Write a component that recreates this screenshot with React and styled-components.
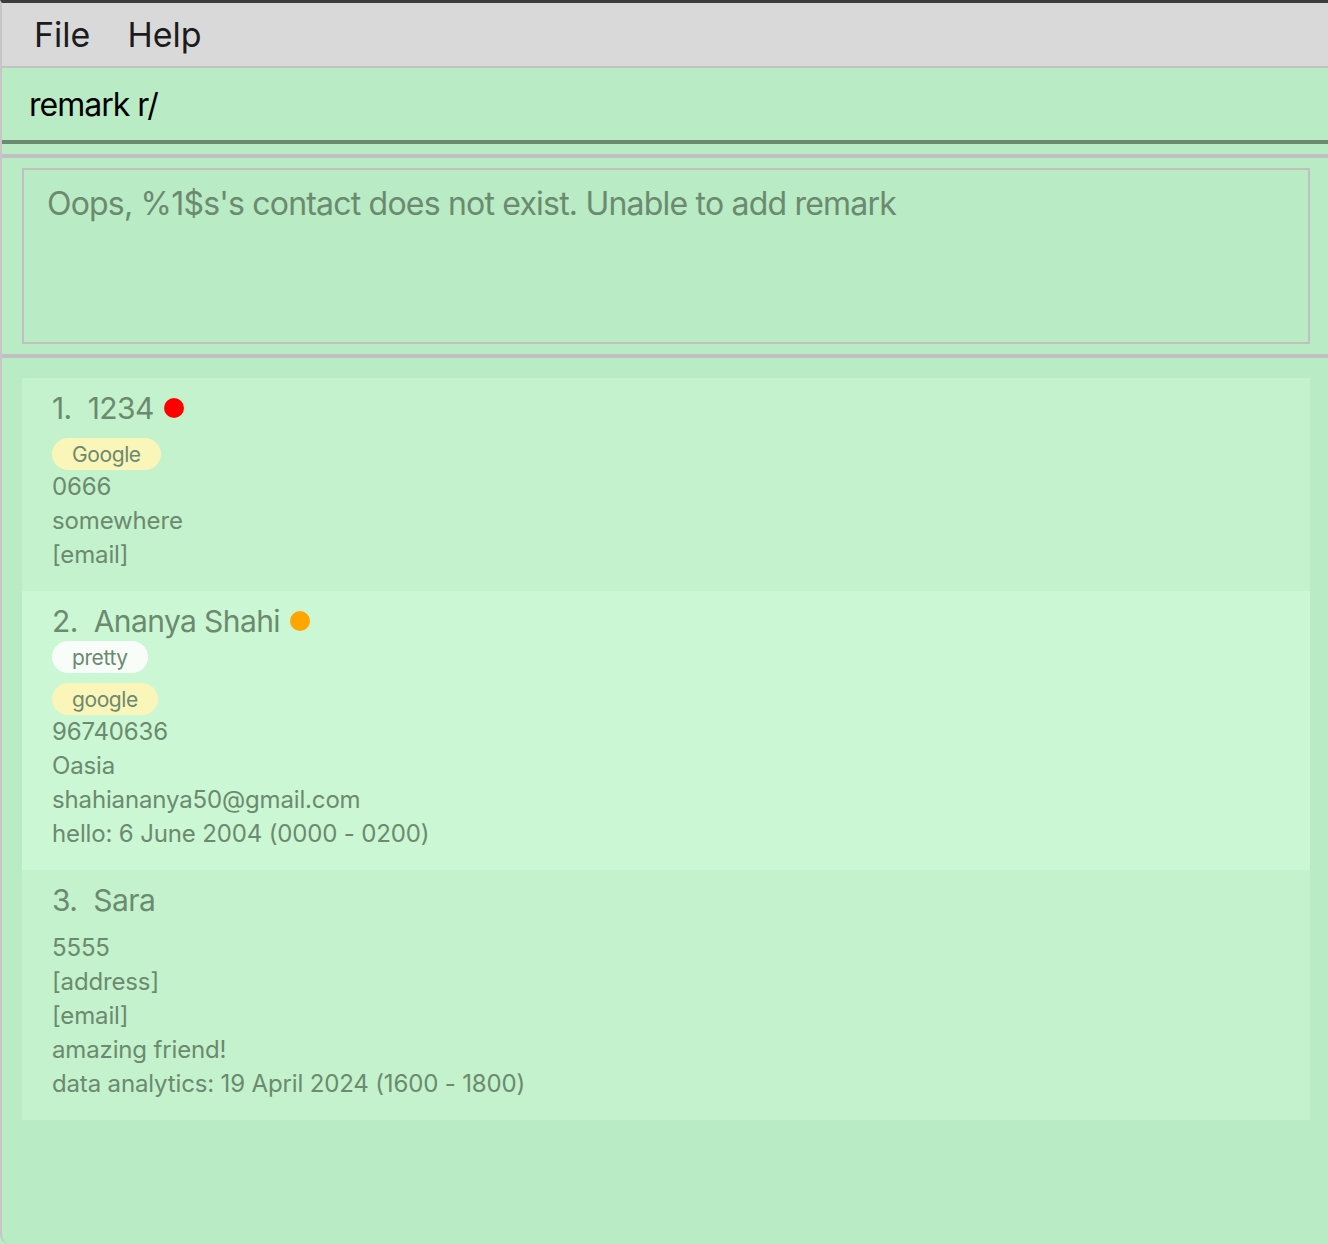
import React from "react";
import styled, { createGlobalStyle } from "styled-components";

const GlobalStyle = createGlobalStyle`
  html, body {
    margin: 0;
    padding: 0;
    background: #b9ebc5;
  }
  body {
    font-family: Inter, "Noto Sans", sans-serif;
  }
`;

const persons = [
  {
    index: 1,
    name: "1234",
    dot: "#ff0000",
    tags: [{ label: "Google", color: "#faf5b9" }],
    lines: ["0666", "somewhere", "[email]"],
    nameGap: 12,
  },
  {
    index: 2,
    name: "Ananya Shahi",
    dot: "#ffa500",
    tags: [
      { label: "pretty", color: "#f8fdf9" },
      { label: "google", color: "#faf5b9" },
    ],
    lines: [
      "96740636",
      "Oasia",
      "shahiananya50@gmail.com",
      "hello: 6 June 2004 (0000 - 0200)",
    ],
    nameGap: 2,
    light: true,
  },
  {
    index: 3,
    name: "Sara",
    tags: [],
    lines: [
      "5555",
      "[address]",
      "[email]",
      "amazing friend!",
      "data analytics: 19 April 2024 (1600 - 1800)",
    ],
    nameGap: 13,
  },
];

export default function App() {
  return (
    <>
      <GlobalStyle />
      <Window>
        <MenuBar>
          <MenuItem>File</MenuItem>
          <MenuItem>Help</MenuItem>
        </MenuBar>
        <CommandBox>remark r/</CommandBox>
        <ResultPane>
          <ResultBox>
            Oops, %1$s's contact does not exist. Unable to add remark
          </ResultBox>
        </ResultPane>
        <PersonList>
          {persons.map((p) => (
            <Card key={p.index} $light={p.light}>
              <NameRow>
                <span>{p.index}.</span>
                <span>{p.name}</span>
                {p.dot && <Dot $color={p.dot} />}
              </NameRow>
              <Tags $gap={p.nameGap}>
                {p.tags.map((t) => (
                  <Tag key={t.label} $color={t.color}>
                    {t.label}
                  </Tag>
                ))}
              </Tags>
              {p.lines.map((line, i) => (
                <Line key={i}>{line}</Line>
              ))}
            </Card>
          ))}
        </PersonList>
      </Window>
    </>
  );
}

const Window = styled.div`
  display: flex;
  flex-direction: column;
  height: 1244px;
  box-sizing: border-box;
  border-top: 3px solid #3c3c3c;
  border-left: 2px solid #c6c6c6;
  border-bottom-left-radius: 10px;
  background: #b9ebc5;
  overflow: hidden;
`;

const MenuBar = styled.div`
  display: flex;
  align-items: center;
  gap: 37px;
  height: 63px;
  padding-left: 32px;
  background: #d9d9d9;
  border-bottom: 2px solid #c2c2c2;
`;

const MenuItem = styled.span`
  font-size: 34px;
  color: #1c1c1c;
`;

const CommandBox = styled.div`
  display: flex;
  align-items: center;
  height: 72px;
  padding-left: 27px;
  font-size: 32px;
  letter-spacing: -1px;
  color: #000;
  border-bottom: 4px solid #6b8a6f;
  margin-bottom: 10px;
`;

const ResultPane = styled.div`
  padding: 10px 18px 10px 20px;
  border-top: 4px solid #c0c0c0;
  border-bottom: 4px solid #c0c0c0;
`;

const ResultBox = styled.div`
  box-sizing: border-box;
  height: 176px;
  border: 2px solid #c0c0c0;
  padding: 14px 23px 0;
  font-size: 32px;
  letter-spacing: -0.8px;
  color: #6b8a6f;
`;

const PersonList = styled.div`
  display: flex;
  flex-direction: column;
  padding: 20px 18px 0 20px;
`;

const Card = styled.div`
  display: flex;
  flex-direction: column;
  align-items: flex-start;
  padding: 12px 30px 19px;
  background: ${(p) => (p.$light ? "#cbf7d4" : "#c4f2cc")};
`;

const NameRow = styled.div`
  display: flex;
  align-items: center;
  gap: 16px;
  height: 36px;
  font-size: 30px;
  color: #6b8a6f;
  letter-spacing: -0.6px;
`;

const Dot = styled.span`
  width: 20px;
  height: 20px;
  border-radius: 50%;
  margin-left: -6px;
  background: ${(p) => p.$color};
`;

const Tags = styled.div`
  display: flex;
  flex-direction: column;
  align-items: flex-start;
  gap: 10px;
  margin-top: ${(p) => p.$gap}px;
`;

const Tag = styled.span`
  display: inline-flex;
  align-items: center;
  height: 32px;
  padding: 0 20px;
  border-radius: 16px;
  font-size: 21px;
  letter-spacing: -0.4px;
  color: #6b8a6f;
  background: ${(p) => p.$color};
`;

const Line = styled.div`
  height: 34px;
  line-height: 34px;
  font-size: 24px;
  letter-spacing: -0.15px;
  color: #6b8a6f;
`;
